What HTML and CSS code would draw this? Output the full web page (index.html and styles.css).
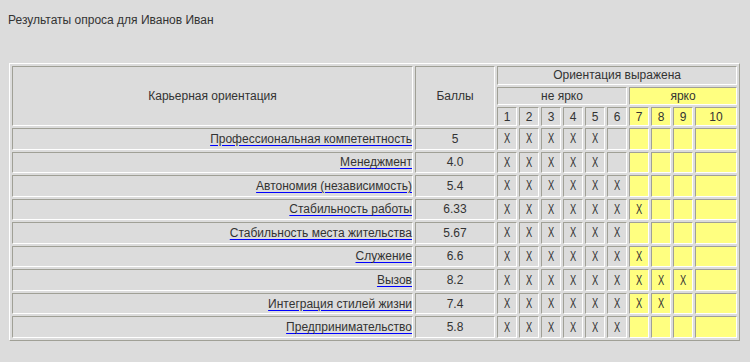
FILE: index.html
```html
<!DOCTYPE html>
<html lang="ru">
<head>
<meta charset="utf-8">
<title>Результаты опроса</title>
<link rel="stylesheet" href="styles.css">
</head>
<body>
<div class="title">Результаты опроса для Иванов Иван</div>
<table class="results">
  <colgroup>
    <col class="c-name">
    <col class="c-score">
    <col class="c-n" span="9">
    <col class="c-wide">
  </colgroup>
  <thead>
    <tr class="hrow">
      <th rowspan="3">Карьерная ориентация</th>
      <th rowspan="3">Баллы</th>
      <th colspan="10">Ориентация выражена</th>
    </tr>
    <tr class="hrow">
      <th colspan="6">не ярко</th>
      <th colspan="4" class="y">ярко</th>
    </tr>
    <tr class="hrow">
      <th>1</th><th>2</th><th>3</th><th>4</th><th>5</th><th>6</th>
      <th class="y">7</th><th class="y">8</th><th class="y">9</th><th class="y">10</th>
    </tr>
  </thead>
  <tbody>
    <tr>
      <td class="name"><a href="#">Профессиональная компетентность</a></td>
      <td>5</td>
      <td><span class="x">X</span></td><td><span class="x">X</span></td><td><span class="x">X</span></td><td><span class="x">X</span></td><td><span class="x">X</span></td><td></td>
      <td class="y"></td><td class="y"></td><td class="y"></td><td class="y"></td>
    </tr>
    <tr>
      <td class="name"><a href="#">Менеджмент</a></td>
      <td>4.0</td>
      <td><span class="x">X</span></td><td><span class="x">X</span></td><td><span class="x">X</span></td><td><span class="x">X</span></td><td><span class="x">X</span></td><td></td>
      <td class="y"></td><td class="y"></td><td class="y"></td><td class="y"></td>
    </tr>
    <tr>
      <td class="name"><a href="#">Автономия (независимость)</a></td>
      <td>5.4</td>
      <td><span class="x">X</span></td><td><span class="x">X</span></td><td><span class="x">X</span></td><td><span class="x">X</span></td><td><span class="x">X</span></td><td><span class="x">X</span></td>
      <td class="y"></td><td class="y"></td><td class="y"></td><td class="y"></td>
    </tr>
    <tr>
      <td class="name"><a href="#">Стабильность работы</a></td>
      <td>6.33</td>
      <td><span class="x">X</span></td><td><span class="x">X</span></td><td><span class="x">X</span></td><td><span class="x">X</span></td><td><span class="x">X</span></td><td><span class="x">X</span></td>
      <td class="y"><span class="x">X</span></td><td class="y"></td><td class="y"></td><td class="y"></td>
    </tr>
    <tr>
      <td class="name"><a href="#">Стабильность места жительства</a></td>
      <td>5.67</td>
      <td><span class="x">X</span></td><td><span class="x">X</span></td><td><span class="x">X</span></td><td><span class="x">X</span></td><td><span class="x">X</span></td><td><span class="x">X</span></td>
      <td class="y"></td><td class="y"></td><td class="y"></td><td class="y"></td>
    </tr>
    <tr>
      <td class="name"><a href="#">Служение</a></td>
      <td>6.6</td>
      <td><span class="x">X</span></td><td><span class="x">X</span></td><td><span class="x">X</span></td><td><span class="x">X</span></td><td><span class="x">X</span></td><td><span class="x">X</span></td>
      <td class="y"><span class="x">X</span></td><td class="y"></td><td class="y"></td><td class="y"></td>
    </tr>
    <tr>
      <td class="name"><a href="#">Вызов</a></td>
      <td>8.2</td>
      <td><span class="x">X</span></td><td><span class="x">X</span></td><td><span class="x">X</span></td><td><span class="x">X</span></td><td><span class="x">X</span></td><td><span class="x">X</span></td>
      <td class="y"><span class="x">X</span></td><td class="y"><span class="x">X</span></td><td class="y"><span class="x">X</span></td><td class="y"></td>
    </tr>
    <tr>
      <td class="name"><a href="#">Интеграция стилей жизни</a></td>
      <td>7.4</td>
      <td><span class="x">X</span></td><td><span class="x">X</span></td><td><span class="x">X</span></td><td><span class="x">X</span></td><td><span class="x">X</span></td><td><span class="x">X</span></td>
      <td class="y"><span class="x">X</span></td><td class="y"><span class="x">X</span></td><td class="y"></td><td class="y"></td>
    </tr>
    <tr>
      <td class="name"><a href="#">Предпринимательство</a></td>
      <td>5.8</td>
      <td><span class="x">X</span></td><td><span class="x">X</span></td><td><span class="x">X</span></td><td><span class="x">X</span></td><td><span class="x">X</span></td><td><span class="x">X</span></td>
      <td class="y"></td><td class="y"></td><td class="y"></td><td class="y"></td>
    </tr>
  </tbody>
</table>
</body>
</html>
```

FILE: styles.css
```css
html {
  background: #dcdcdc;
}

body {
  margin: 8px;
  font-family: "Liberation Sans", Arial, sans-serif;
  font-size: 12px;
  color: #333;
}

.title {
  margin-top: 5px;
  line-height: 14px;
}

.results {
  margin: 36px 0 0 1px;
  width: 731px;
  table-layout: fixed;
  border-collapse: separate;
  border-spacing: 2px;
  border: 1px solid;
  border-color: #fff #a0a096 #a0a096 #fff;
}

.c-name { width: 401px; }
.c-score { width: 80px; }
.c-n { width: 20px; }
.c-wide { width: 42px; }

.results th,
.results td {
  border: 1px solid;
  border-color: #a0a096 #fff #fff #a0a096;
  padding: 0;
  font-weight: normal;
  text-align: center;
  vertical-align: middle;
  line-height: 14px;
  white-space: nowrap;
}

.hrow {
  height: 18.67px;
}

.results tbody tr {
  height: 21.55px;
}

.results .y {
  background: #ffff80;
}

.results td.name {
  text-align: right;
}

.name a {
  color: #333;
  text-decoration: underline;
  text-decoration-color: #0000ff;
  text-underline-offset: 2px;
}

.x {
  display: inline-block;
  font-size: 15px;
  transform: scaleX(0.62);
}
```
